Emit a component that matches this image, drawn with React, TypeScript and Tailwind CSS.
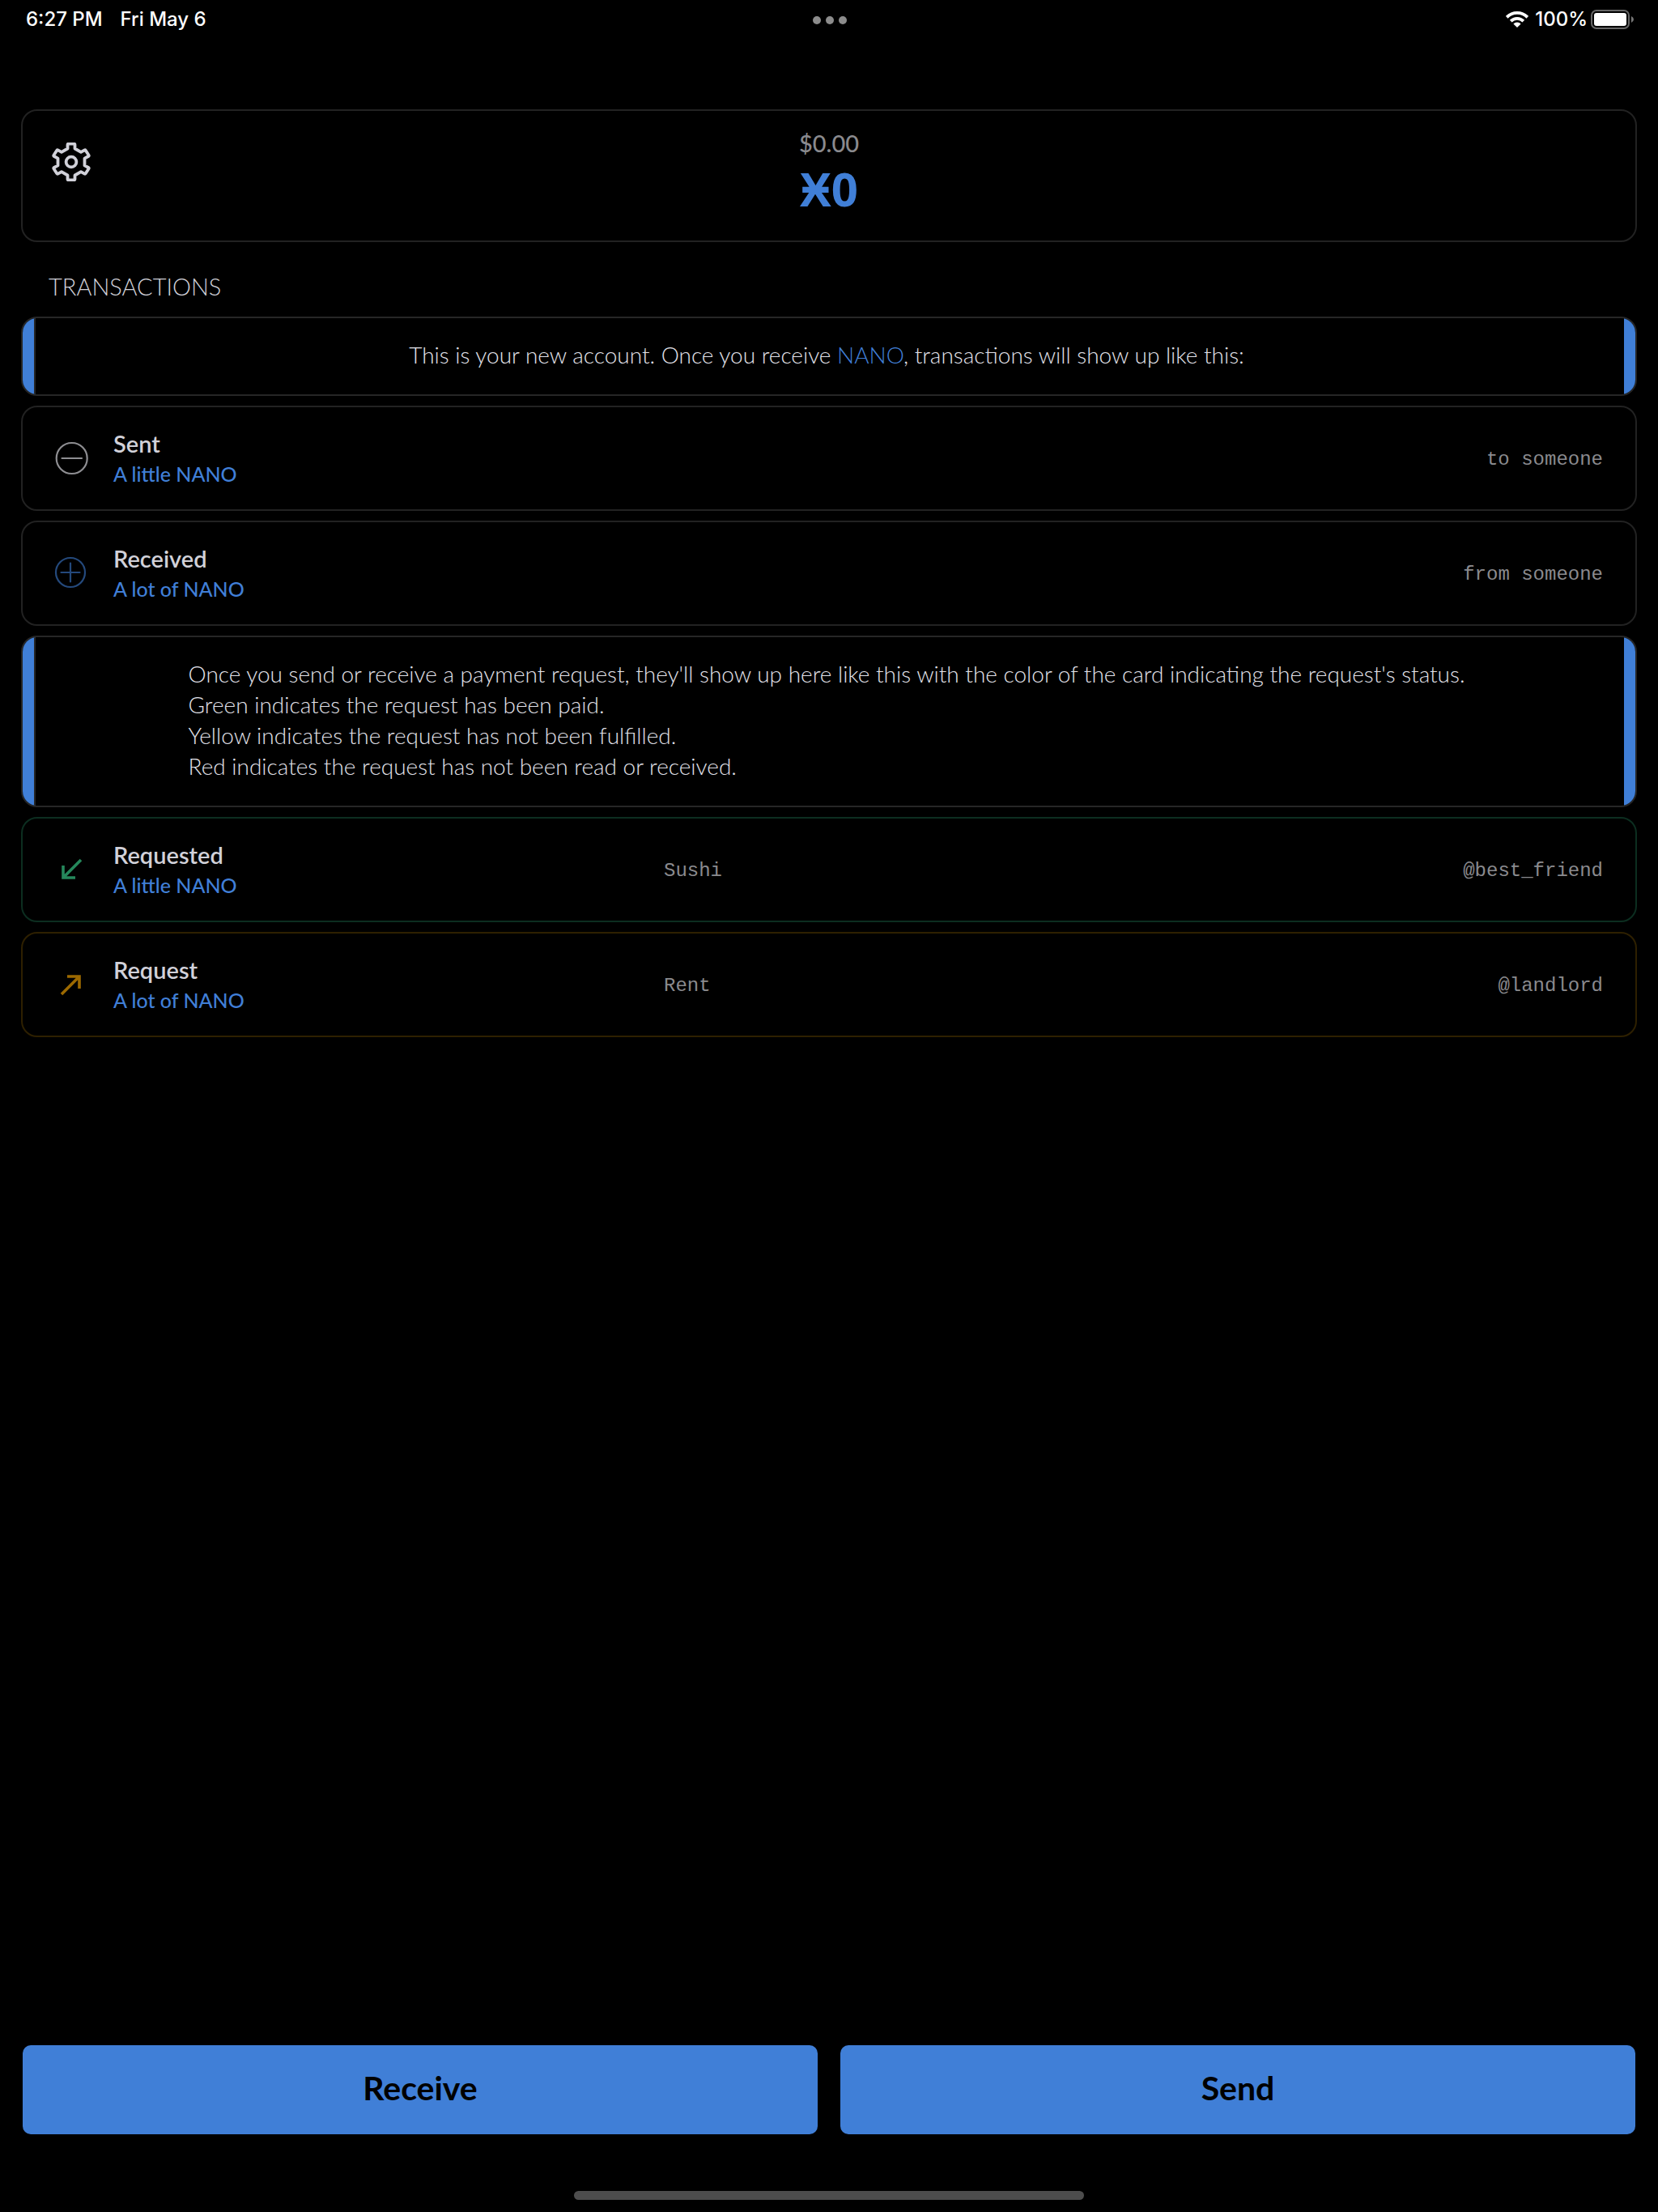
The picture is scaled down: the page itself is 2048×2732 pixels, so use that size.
import type { ReactNode } from "react";

function SettingsIcon() {
  return (
    <svg viewBox="-24 -24 48 48" className="size-12" fill="none" stroke="currentColor" strokeWidth="3.8" strokeLinejoin="round" aria-hidden="true">
      <path d="M-4.5-16.5V-21.3Q-4.5-22.3-3.5-22.3H3.5Q4.5-22.3 4.5-21.3V-16.5L12-12.2 16.4-14.6Q17.2-15 17.8-14.2L21.6-8.3Q22.1-7.5 21.2-7L16.5-4.4V4.4L21.2 7Q22.1 7.5 21.6 8.3L17.8 14.2Q17.2 15 16.4 14.6L12 12.2 4.5 16.5V21.3Q4.5 22.3 3.5 22.3H-3.5Q-4.5 22.3-4.5 21.3V16.5L-12 12.2-16.4 14.6Q-17.2 15-17.8 14.2L-21.6 8.3Q-22.1 7.5-21.2 7L-16.5 4.4V-4.4L-21.2-7Q-22.1-7.5-21.6-8.3L-17.8-14.2Q-17.2-15-16.4-14.6L-12-12.2Z" />
      <circle r="6.4" />
    </svg>
  );
}

function MinusIcon() {
  return (
    <svg viewBox="0 0 48 48" className="size-12 shrink-0 text-[#8e8e92]" fill="none" stroke="currentColor" strokeWidth="2.2" aria-hidden="true">
      <circle cx="24.7" cy="24" r="19" />
      <path d="M12.5 24H37" strokeLinecap="round" />
    </svg>
  );
}

function PlusIcon() {
  return (
    <svg viewBox="0 0 48 48" className="size-12 shrink-0 text-[#24497c]" fill="none" stroke="currentColor" strokeWidth="2.2" aria-hidden="true">
      <circle cx="23" cy="23" r="18" />
      <path d="M11.5 23H34.5M23 11.5V34.5" strokeLinecap="round" />
    </svg>
  );
}

function ArrowInIcon() {
  return (
    <svg viewBox="0 0 48 48" className="size-12 shrink-0 text-[#25875b]" fill="none" stroke="currentColor" strokeWidth="3.6" aria-hidden="true">
      <path d="M14 19V34H29M14 34L36 12" />
    </svg>
  );
}

function ArrowOutIcon() {
  return (
    <svg viewBox="0 0 48 48" className="size-12 shrink-0 text-[#9c6900]" fill="none" stroke="currentColor" strokeWidth="3.6" aria-hidden="true">
      <path d="M19 14H34V29M34 14L12 36" />
    </svg>
  );
}

function WifiIcon() {
  return (
    <svg viewBox="0 0 28 20" className="h-5 w-7" fill="none" stroke="currentColor" strokeWidth="3.8" aria-hidden="true">
      <path d="M1.2 7.3A18 18 0 0 1 26.8 7.3" />
      <path d="M6.2 12.2A11 11 0 0 1 21.8 12.2" />
      <path d="M14 20L9.4 15.4A6.6 6.6 0 0 1 18.6 15.4Z" fill="currentColor" stroke="none" />
    </svg>
  );
}

function BatteryIcon() {
  return (
    <svg viewBox="0 0 53 24" className="h-6 w-[53px]" aria-hidden="true">
      <rect x="1" y="1" width="46" height="22" rx="6" fill="none" stroke="#666" strokeWidth="2" />
      <rect x="4" y="4" width="40" height="16" rx="3" fill="#fff" />
      <path d="M50 8Q53 9.5 53 12T50 16Z" fill="#777" />
    </svg>
  );
}

function Notice({ children }: { children: ReactNode }) {
  return (
    <div className="flex overflow-hidden rounded-[20px] border-2 border-[#262626]">
      <div className="w-4 border-r-2 border-[#262626] bg-[#407fd7]" />
      <div className="flex flex-1 justify-center pt-[26px] pr-2 pb-[30px] text-[28px] leading-[38px] font-light text-[#e2e2ea]">
        <p>{children}</p>
      </div>
      <div className="w-[14px] bg-[#407fd7]" />
    </div>
  );
}

interface RowProps {
  icon: ReactNode;
  title: string;
  amount: string;
  note?: string;
  party: string;
  border: string;
}

function Row({ icon, title, amount, note, party, border }: RowProps) {
  return (
    <div className={`grid grid-cols-[33fr_50fr] items-center rounded-[20px] border-2 py-7 ${border}`}>
      <div className="flex items-center gap-7 pl-9">
        {icon}
        <div>
          <div className="mb-1 text-[29px] leading-[34px] font-semibold text-[#d1d1d9]">{title}</div>
          <div className="text-[25px] leading-8 font-medium text-[#407fd7]">{amount}</div>
        </div>
      </div>
      <div className="flex justify-between pt-1 pr-10 font-['Liberation_Mono',monospace] text-2xl text-[#8a8a8e]">
        <span>{note}</span>
        <span>{party}</span>
      </div>
    </div>
  );
}

export default function App() {
  return (
    <div className="flex min-h-screen flex-col bg-black font-['Lato',sans-serif] text-white">
      <div className="grid h-12 grid-cols-[1fr_auto_1fr] items-center pr-[30px] pl-8 font-['Inter',sans-serif] text-2xl font-medium">
        <div className="flex gap-[22px]">
          <span>6:27 PM</span>
          <span>Fri May 6</span>
        </div>
        <div className="flex gap-1.5 pt-0.5">
          <span className="size-2.5 rounded-full bg-[#8c8c8c]" />
          <span className="size-2.5 rounded-full bg-[#8c8c8c]" />
          <span className="size-2.5 rounded-full bg-[#8c8c8c]" />
        </div>
        <div className="flex items-center justify-end">
          <WifiIcon />
          <span className="mr-1 ml-2">100%</span>
          <BatteryIcon />
        </div>
      </div>

      <main className="flex flex-1 flex-col px-[26px] pt-[87px]">
        <header className="grid grid-cols-[1fr_auto_1fr] items-start rounded-[20px] border-2 border-[#222] pt-5 pb-7">
          <button type="button" aria-label="Settings" className="mt-[19px] ml-9 size-12 text-[#d1d1d9]">
            <SettingsIcon />
          </button>
          <div className="text-center">
            <div className="text-[29px] leading-10 font-medium text-[#8a8a8e]">$0.00</div>
            <div className="font-['Open_Sans',sans-serif] text-[58px] leading-[72px] font-bold text-[#407fd7]">Ӿ0</div>
          </div>
        </header>

        <h2 className="mt-9 mb-[18px] pl-[34px] text-[29px] leading-[38px] font-light text-[#d1d1d9]">TRANSACTIONS</h2>

        <section className="flex flex-col gap-3">
          <Notice>
            This is your new account. Once you receive <span className="text-[#407fd7]">NANO</span>, transactions will show up like this:
          </Notice>
          <Row icon={<MinusIcon />} title="Sent" amount="A little NANO" party="to someone" border="border-[#222]" />
          <Row icon={<PlusIcon />} title="Received" amount="A lot of NANO" party="from someone" border="border-[#222]" />
          <Notice>
            Once you send or receive a payment request, they'll show up here like this with the color of the card indicating the request's status.
            <br />
            Green indicates the request has been paid.
            <br />
            Yellow indicates the request has not been fulfilled.
            <br />
            Red indicates the request has not been read or received.
          </Notice>
          <Row icon={<ArrowInIcon />} title="Requested" amount="A little NANO" note="Sushi" party="@best_friend" border="border-[#0c2e20]" />
          <Row icon={<ArrowOutIcon />} title="Request" amount="A lot of NANO" note="Rent" party="@landlord" border="border-[#2e2000]" />
        </section>
      </main>

      <footer className="px-7 pb-[15px]">
        <div className="grid grid-cols-2 gap-7">
          <button type="button" className="h-[110px] rounded-[10px] bg-[#407fd7] pb-1 text-[41px] font-bold text-black">Receive</button>
          <button type="button" className="h-[110px] rounded-[10px] bg-[#407fd7] pb-1 text-[41px] font-bold text-black">Send</button>
        </div>
        <div className="mx-auto mt-[70px] h-[11px] w-[630px] rounded-full bg-[#4d4d4d]" />
      </footer>
    </div>
  );
}
